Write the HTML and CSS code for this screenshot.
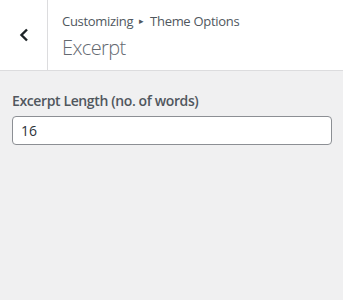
FILE: index.html
```html
<!DOCTYPE html>
<html>

<head>
  <title>Customizer - Excerpt</title>
  <link rel="stylesheet" href="styles.css">
</head>

<body>
  <div class="section-header">
    <button class="back-button" aria-label="Back">
      <svg width="12" height="14" viewBox="0 0 12 14"><path d="M9 1.5 3.5 7 9 12.5" fill="none" stroke="#1d2327" stroke-width="2.4"/></svg>
    </button>
    <div class="section-title">
      <span class="breadcrumb">Customizing <span class="arrow">&#9656;</span> Theme Options</span>
      <h3>Excerpt</h3>
    </div>
  </div>

  <div class="control">
    <label for="excerpt-length" class="control-title">Excerpt Length (no. of words)</label>
    <input type="text" id="excerpt-length" value="16">
  </div>
</body>

</html>
```

FILE: styles.css
```css
body {
  margin: 0;
  font-family: "Open Sans", "Noto Sans", sans-serif;
  font-size: 13px;
  background: #f0f0f1;
  color: #50575e;
  height: 300px;
}

.section-header {
  display: flex;
  background: #fff;
  border-bottom: 1px solid #dcdcde;
  height: 70px;
}

.back-button {
  width: 48px;
  border: 0;
  border-right: 1px solid #dcdcde;
  background: #fff;
  display: flex;
  align-items: center;
  justify-content: center;
  padding: 0;
}

.section-title {
  padding: 11px 14px;
}

.breadcrumb {
  display: block;
  font-size: 13px;
  line-height: 20px;
  letter-spacing: -0.3px;
  color: #50575e;
}

.arrow {
  font-size: 9px;
  vertical-align: 2px;
  margin: 0 3px;
}

h3 {
  margin: 4px 0 0;
  font-size: 20px;
  font-weight: 300;
  line-height: 26px;
  letter-spacing: -0.6px;
  color: #646970;
}

.control {
  padding: 20px 11px 0 12px;
}

.control-title {
  display: block;
  font-size: 14px;
  font-weight: 600;
  color: #50575e;
  line-height: 20px;
  letter-spacing: -0.38px;
  margin-bottom: 5px;
}

input {
  box-sizing: border-box;
  width: 100%;
  height: 29px;
  border: 1px solid #8c8f94;
  border-radius: 4px;
  padding: 0 8px;
  font-family: inherit;
  font-size: 14px;
  color: #2c3338;
}
```
